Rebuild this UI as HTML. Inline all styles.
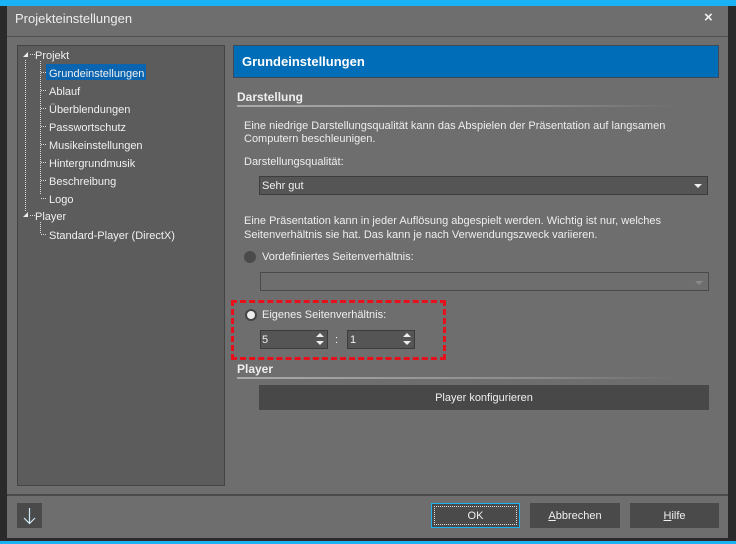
<!DOCTYPE html>
<html><head><meta charset="utf-8"><style>
*{margin:0;padding:0;box-sizing:border-box}
body{width:736px;height:544px;background:#2a2a2a;font-family:"Liberation Sans",sans-serif;font-size:11px;color:#f0f0f0;position:relative;overflow:hidden}
.a{position:absolute}
.t{white-space:nowrap}
.d{margin-top:1px}
</style></head><body>
<div class="a" style="left:0;top:0;width:736px;height:6px;background:#1ab2f2"></div>
<div class="a" style="left:7px;top:6px;width:721px;height:532px;background:#6e6e6e"></div>
<div class="a" style="left:0;top:541px;width:736px;height:3px;background:#1ab2f2"></div>
<div class="a t" style="left:15px;top:11px;font-size:13px;color:#eee">Projekteinstellungen</div>
<div class="a t" style="left:704px;top:9px;font-size:15px;font-weight:bold;color:#eee">×</div>
<div class="a" style="left:7px;top:36px;width:721px;height:1px;background:#505050"></div>
<!-- tree -->
<div class="a" style="left:17px;top:45px;width:208px;height:441px;background:#5c5c5c;border:1px solid #444"></div>
<svg class="a" style="left:17px;top:45px" width="208" height="200">
<g stroke="#ddd" stroke-dasharray="1,1" fill="none">
<path d="M8.5 15V167M13 9.5H18M13 170.5H18M23.5 16V150M24 27.5H30M24 45.5H30M24 63.5H30M24 81.5H30M24 99.5H30M24 117.5H30M24 135.5H30M24 153.5H30M23.5 177V188M24 189.5H30"/>
</g>
<path d="M6 12l5-5v5z M6 172l5-5v5z" fill="#eee"/>
</svg>
<div class="a" style="left:46px;top:64px;width:100px;height:16px;background:#0a64b0"></div>
<div class="a t d" style="left:35px;top:48px;line-height:14px">Projekt</div>
<div class="a t d" style="left:49px;top:66px;line-height:14px">Grundeinstellungen</div>
<div class="a t d" style="left:49px;top:84px;line-height:14px">Ablauf</div>
<div class="a t d" style="left:49px;top:102px;line-height:14px">Überblendungen</div>
<div class="a t d" style="left:49px;top:120px;line-height:14px">Passwortschutz</div>
<div class="a t d" style="left:49px;top:138px;line-height:14px">Musikeinstellungen</div>
<div class="a t d" style="left:49px;top:156px;line-height:14px">Hintergrundmusik</div>
<div class="a t d" style="left:49px;top:174px;line-height:14px">Beschreibung</div>
<div class="a t d" style="left:49px;top:192px;line-height:14px">Logo</div>
<div class="a t d" style="left:35px;top:209px;line-height:14px">Player</div>
<div class="a t d" style="left:49px;top:228px;line-height:14px">Standard-Player (DirectX)</div>
<!-- right -->
<div class="a" style="left:233px;top:45px;width:486px;height:33px;background:#006db8;border:1px solid #3a4a5a"></div>
<div class="a t" style="left:242px;top:54px;font-size:13px;font-weight:bold;color:#fff">Grundeinstellungen</div>
<div class="a t" style="left:237px;top:90px;font-weight:bold;font-size:12px;color:#eee">Darstellung</div>
<div class="a" style="left:237px;top:105px;width:440px;height:2px;background:linear-gradient(90deg,#aaa,#8a8a8a 70%,#6e6e6e)"></div>
<div class="a t d" style="left:244px;top:119px;line-height:13px;color:#eee">Eine niedrige Darstellungsqualität kann das Abspielen der Präsentation auf langsamen<br>Computern beschleunigen.</div>
<div class="a t d" style="left:244px;top:155px;color:#eee">Darstellungsqualität:</div>
<div class="a" style="left:259px;top:176px;width:449px;height:19px;background:#555;border:1px solid #3c3c3c"></div>
<div class="a t d" style="left:262px;top:179px">Sehr gut</div>
<div class="a" style="left:694px;top:184px;border:4px solid transparent;border-top:4px solid #eee;border-bottom:0"></div>
<div class="a t d" style="left:244px;top:213px;line-height:14px;color:#eee">Eine Präsentation kann in jeder Auflösung abgespielt werden. Wichtig ist nur, welches<br>Seitenverhältnis sie hat. Das kann je nach Verwendungszweck variieren.</div>
<div class="a" style="left:244px;top:251px;width:12px;height:12px;border-radius:50%;background:#4a4a4a"></div>
<div class="a t d" style="left:262px;top:250px;color:#eee">Vordefiniertes Seitenverhältnis:</div>
<div class="a" style="left:260px;top:272px;width:449px;height:19px;border:1px solid #4a4a4a"></div>
<div class="a" style="left:695px;top:281px;border:4px solid transparent;border-top:4px solid #888;border-bottom:0"></div>
<div class="a" style="left:231px;top:300px;width:215px;height:60px;border:3px dashed #e8101a"></div>
<div class="a" style="left:245px;top:309px;width:12px;height:12px;border-radius:50%;background:#eee;border:2px solid #444"></div>
<div class="a t d" style="left:262px;top:308px;color:#eee">Eigenes Seitenverhältnis:</div>
<div class="a" style="left:260px;top:330px;width:68px;height:19px;background:#555;border:1px solid #3c3c3c"></div>
<div class="a t d" style="left:262px;top:333px">5</div>
<svg class="a" style="left:314px;top:332px" width="12" height="14"><path d="M2 5l4-4 4 4zM2 9l4 4 4-4z" fill="#eee"/></svg>
<div class="a t d" style="left:335px;top:333px">:</div>
<div class="a" style="left:347px;top:330px;width:68px;height:19px;background:#555;border:1px solid #3c3c3c"></div>
<div class="a t d" style="left:350px;top:333px">1</div>
<svg class="a" style="left:401px;top:332px" width="12" height="14"><path d="M2 5l4-4 4 4zM2 9l4 4 4-4z" fill="#eee"/></svg>
<div class="a t" style="left:237px;top:362px;font-weight:bold;font-size:12px;color:#eee">Player</div>
<div class="a" style="left:237px;top:377px;width:440px;height:2px;background:linear-gradient(90deg,#aaa,#8a8a8a 70%,#6e6e6e)"></div>
<div class="a" style="left:259px;top:385px;width:450px;height:25px;background:#484848"></div>
<div class="a t d" style="left:259px;top:391px;width:450px;text-align:center">Player konfigurieren</div>
<!-- footer -->
<div class="a" style="left:7px;top:494px;width:721px;height:2px;background:#4a4a4a"></div>
<div class="a" style="left:17px;top:503px;width:25px;height:25px;background:#4a4a4a"></div>
<svg class="a" style="left:17px;top:503px" width="25" height="25"><path d="M12.5 5V20M7 15l5.5 5.5L18 15" stroke="#cfe8f5" fill="none" stroke-width="1.2"/></svg>
<div class="a" style="left:431px;top:503px;width:89px;height:25px;background:#4a4a4a;border:1px solid #1ab2f2"></div>
<div class="a" style="left:434px;top:506px;width:83px;height:19px;border:1px dotted #ddd"></div>
<div class="a t d" style="left:431px;top:509px;width:89px;text-align:center">OK</div>
<div class="a" style="left:530px;top:503px;width:90px;height:25px;background:#4a4a4a"></div>
<div class="a t d" style="left:530px;top:509px;width:90px;text-align:center"><u>A</u>bbrechen</div>
<div class="a" style="left:630px;top:503px;width:89px;height:25px;background:#4a4a4a"></div>
<div class="a t d" style="left:630px;top:509px;width:89px;text-align:center"><u>H</u>ilfe</div>
</body></html>
